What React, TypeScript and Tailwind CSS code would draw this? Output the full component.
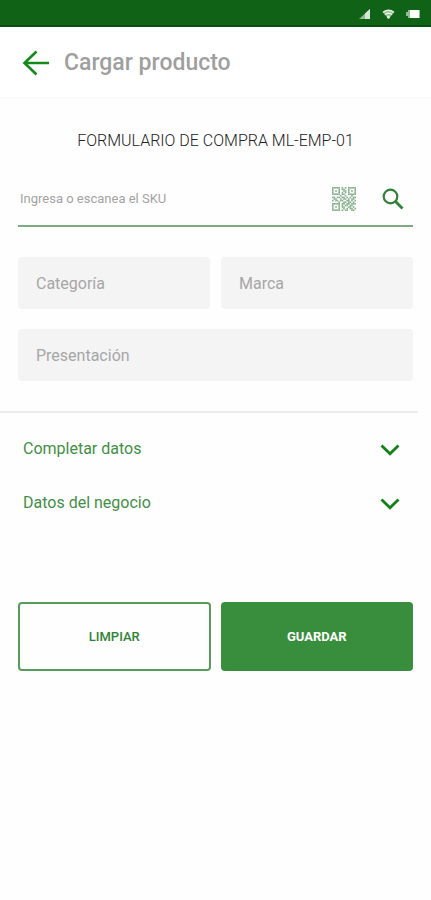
import { useState } from "react";

const QR_ROWS = [
  "111110101011111",
  "100010110010001",
  "101010011010101",
  "100010101010001",
  "111110110011111",
  "000001001000100",
  "110110110101011",
  "011001011010110",
  "101101100110101",
  "000010011011010",
  "111110110110111",
  "100010101101100",
  "101010110011010",
  "100010010101101",
  "111110101100110",
];

function StatusIcons() {
  return (
    <div className="flex items-center gap-[10px]" aria-hidden="true">
      <svg width="14" height="12" viewBox="0 0 14 12">
        <path d="M1 11 L12 1 V11 Z" fill="#8fbd91" />
        <path d="M7 5.5 L12 1 V11 H7 Z" fill="#d5e8d6" />
      </svg>
      <svg width="13" height="12" viewBox="0 0 13 12">
        <path d="M1 4.4 Q6.500 0 12 4.400 L6.500 11 Z" fill="#8fbd91" />
        <path d="M1 4.300 Q6.500 0.300 12 4.300 M3 6.600 Q6.500 4 10 6.600" fill="none" stroke="#e4f1e5" strokeWidth="1.500" />
        <circle cx="6.500" cy="9" r="1.500" fill="#e4f1e5" />
      </svg>
      <svg width="16" height="12" viewBox="0 0 16 12">
        <path d="M1 4 H3 V2 H15 V10 H3 V8 H1 Z" fill="#8fbd91" />
        <rect x="5" y="2" width="9" height="8" fill="#ffffff" />
      </svg>
    </div>
  );
}

function QrIcon() {
  return (
    <svg width="24" height="24" viewBox="0 0 15 15" aria-hidden="true">
      {QR_ROWS.flatMap((row, y) =>
        row.split("").map((cell, x) =>
          cell === "1" ? (
            <rect key={`${x}-${y}`} x={x} y={y} width="1" height="1" fill="#86b08b" />
          ) : null
        )
      )}
    </svg>
  );
}

function Field({ id, label, wide = false }: { id: string; label: string; wide?: boolean }) {
  return (
    <input
      id={id}
      aria-label={label}
      placeholder={label}
      className={`h-[52px] w-full min-w-0 rounded-[4px] bg-[#f4f4f4] px-[18px] text-[16px] text-[#555555] outline-none placeholder:text-[#a6a6a6] ${wide ? "col-span-2" : ""}`}
    />
  );
}

function Section({ title }: { title: string }) {
  const [open, setOpen] = useState(false);
  return (
    <button
      type="button"
      aria-expanded={open}
      onClick={() => setOpen(!open)}
      className="flex h-[54px] w-full items-center justify-between pr-[31px] pl-[23px] text-[16px] text-[#438f46]"
    >
      {title}
      <svg width="20" height="12" viewBox="0 0 20 12" className="mt-[2px]" aria-hidden="true">
        <path d="M1.500 1.500 L10 9.800 L18.500 1.500" fill="none" stroke="#128217" strokeWidth="2.800" />
      </svg>
    </button>
  );
}

export default function App() {
  return (
    <div className="min-h-screen bg-[#fefefe] font-['Roboto','Liberation_Sans',sans-serif]">
      <div className="flex h-[27px] items-center justify-end border-b-2 border-[#0b4f10] bg-[#106316] pt-[2px] pr-[10px]">
        <StatusIcons />
      </div>
      <header className="flex h-[71px] items-center border-b border-[#f8f8f8] bg-white px-[22px] pt-[2px]">
        <button type="button" aria-label="Volver" className="mr-[14px]">
          <svg width="28" height="26" viewBox="0 0 28 26" aria-hidden="true">
            <path d="M14.500 1.500 L2.500 13 L14.500 24.500 M2.500 13 H27" fill="none" stroke="#158a1b" strokeWidth="2.600" />
          </svg>
        </button>
        <h1 className="text-[23px] font-medium text-[#9f9f9f]">Cargar producto</h1>
      </header>
      <form onSubmit={(e) => e.preventDefault()}>
        <div className="px-[18px] pt-[31px] pb-[30px]">
          <h2 className="text-center text-[16px] leading-6 font-light text-[#222222]">FORMULARIO DE COMPRA ML-EMP-01</h2>
          <div className="mt-[19px] flex h-[55px] items-center border-b-2 border-[#7eaa82] pr-[9px]">
            <input
              aria-label="Ingresa o escanea el SKU"
              placeholder="Ingresa o escanea el SKU"
              className="min-w-0 flex-1 bg-transparent pl-[2px] text-[13px] text-[#555555] outline-none placeholder:text-[#a3a3a3]"
            />
            <button type="button" aria-label="Escanear código" className="mr-[26px]">
              <QrIcon />
            </button>
            <button type="button" aria-label="Buscar">
              <svg width="22" height="22" viewBox="0 0 22 22" aria-hidden="true">
                <circle cx="8.500" cy="8.500" r="6.800" fill="none" stroke="#328039" strokeWidth="2.200" />
                <path d="M13.500 13.500 L20.500 20.500" stroke="#328039" strokeWidth="2.800" />
              </svg>
            </button>
          </div>
          <div className="mt-[30px] grid grid-cols-2 gap-x-[11px] gap-y-5">
            <Field id="categoria" label="Categoría" />
            <Field id="marca" label="Marca" />
            <Field id="presentacion" label="Presentación" wide />
          </div>
        </div>
        <hr className="mr-[13px] border-t-2 border-[#ececec]" />
        <div className="pt-[9px]">
          <Section title="Completar datos" />
          <Section title="Datos del negocio" />
        </div>
        <div className="grid grid-cols-2 gap-[10px] px-[18px] pt-[72px]">
          <button type="reset" className="h-[69px] rounded-[4px] border-2 border-[#579c5a] text-[13px] font-medium text-[#2f8434]">
            LIMPIAR
          </button>
          <button type="submit" className="h-[69px] rounded-[4px] bg-[#398e3d] text-[13px] font-bold text-white">
            GUARDAR
          </button>
        </div>
      </form>
    </div>
  );
}
